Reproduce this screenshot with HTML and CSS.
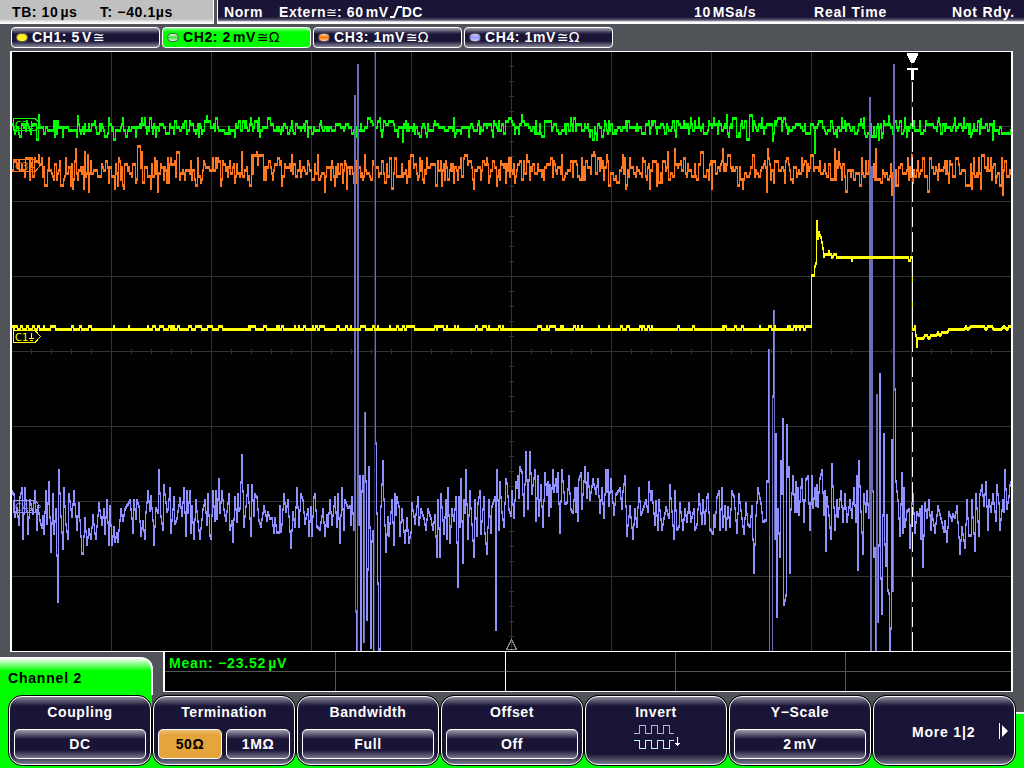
FILE: index.html
```html
<!DOCTYPE html>
<html>
<head>
  <meta charset="utf-8">
  <title>Oscilloscope</title>
  <link rel="stylesheet" href="styles.css">
</head>
<body>
  <div class="scope">
    <div class="header">
      <div class="timebase"><span class="tb">TB: 10<i></i>µs</span><span class="tpos">T: −40.1µs</span></div>
      <div class="trigger">
        <span class="mode">Norm</span>
        <span class="source">Extern<b class="sym">≅</b>: 60<i></i>mV<svg class="edge" width="13" height="12"><path d="M1 11H5L9 1H13" /></svg>DC</span>
        <span class="rate">10<i></i>MSa/s</span>
        <span class="acq">Real Time</span>
        <span class="state">Not Rdy.</span>
      </div>
    </div>

    <div class="channels">
      <div class="channel"><span class="led yellow"></span>CH1: 5<i></i>V<b class="sym">≅</b></div>
      <div class="channel active"><span class="led green"></span>CH2: 2<i></i>mV<b class="sym">≅Ω</b></div>
      <div class="channel"><span class="led orange"></span>CH3: 1mV<b class="sym">≅Ω</b></div>
      <div class="channel"><span class="led violet"></span>CH4: 1mV<b class="sym">≅Ω</b></div>
    </div>

    <svg class="plot" viewBox="10 51 1003 601" width="1003" height="601" shape-rendering="crispEdges">
      <rect x="10" y="51" width="1003" height="601" fill="#fff" />
      <rect x="12" y="52" width="999" height="599" fill="#000" />
      <path id="grid" class="grid" />
      <path class="center-mark" d="M511.5 639.5L506.5 649.5H516.5Z" />

      <g id="traces"></g>

      <g class="tag c2"><path d="M13.5 118.5H35L40.5 124.5L35 130.5H13.5Z" /><text x="15" y="129">C2</text><path d="M31.5 121V126M29 126.5H34M30 128.5H33" /></g>
      <g class="tag c3"><path d="M13.5 159.5H35L40.5 165.5L35 171.5H13.5Z" /><text x="15" y="170">C3</text><path d="M31.5 162V167M29 167.5H34M30 169.5H33" /></g>
      <g class="tag c1"><path d="M13.5 330.5H35L40.5 336.5L35 342.5H13.5Z" /><text x="15" y="341">C1</text><path d="M31.5 333V338M29 338.5H34M30 340.5H33" /></g>
      <g class="tag c4"><path d="M13.5 500.5H35L40.5 506.5L35 512.5H13.5Z" /><text x="15" y="511">C4</text><path d="M31.5 503V508M29 508.5H34M30 510.5H33" /></g>

      <path class="cursor" d="M912.5 82V651" />
      <path fill="#fff" d="M907 53H918V55L914 63H911L907 55ZM907 68H918V70H914V80H911V70H907Z" />
    </svg>

    <div class="lower">
      <div class="tab">Channel 2</div>
      <div class="measure">
        <div class="cell mean">Mean: −23.52<i></i>µV</div><div class="cell lit"></div><div class="cell"></div><div class="cell"></div><div class="cell"></div>
        <div class="cell"></div><div class="cell lit"></div><div class="cell"></div><div class="cell"></div><div class="cell"></div>
      </div>
    </div>

    <div class="softkeys">
      <div class="key"><div class="face"><span>Coupling</span><div class="values"><div class="value">DC</div></div></div></div>
      <div class="key"><div class="face"><span>Termination</span><div class="values"><div class="value selected">50Ω</div><div class="value">1MΩ</div></div></div></div>
      <div class="key"><div class="face"><span>Bandwidth</span><div class="values"><div class="value">Full</div></div></div></div>
      <div class="key"><div class="face"><span>Offset</span><div class="values"><div class="value">Off</div></div></div></div>
      <div class="key"><div class="face"><span>Invert</span>
        <svg class="invert" width="50" height="26" shape-rendering="crispEdges">
          <path stroke="#a4b4e4" d="M0 9.5H5.5V1.5H11.5V9.5H17.5V1.5H23.5V9.5H29.5V1.5H35.5V9.5H40" />
          <path stroke="#c0f4ff" d="M0 16.5H5.5V24.5H11.5V16.5H17.5V24.5H23.5V16.5H29.5V24.5H35.5V16.5H40" />
          <path stroke="#fff" d="M43.5 13V22M41 19.5H46M42 20.5H45" />
        </svg></div></div>
      <div class="key"><div class="face"><span>Y−Scale</span><div class="values"><div class="value">2<i></i>mV</div></div></div></div>
      <div class="key"><div class="face more"><span>More 1|2</span>
        <svg class="next" width="10" height="16"><path d="M0 0H1V16H0ZM3 2L9 8L3 14Z" fill="#fff" /></svg></div></div>
    </div>
  </div>
  <script src="script.js"></script>
</body>
</html>
```
FILE: styles.css
```css
body {
  margin: 0;
  background: #505458;
  color: #fff;
  font-family: "Liberation Sans", Arial, sans-serif;
  font-size: 14px;
  font-weight: bold;
  letter-spacing: 0.6px;
  white-space: nowrap;
}

.scope {
  width: 1024px;
  height: 768px;
  overflow: hidden;
}

/* thin space between number and unit */
i {
  display: inline-block;
  width: 2px;
}

.header {
  display: flex;
  gap: 3px;
  height: 24px;
  line-height: 24px;
}

.timebase {
  box-sizing: border-box;
  width: 214px;
  padding-left: 12px;
  border-right: 1px solid #fff;
  background: linear-gradient(#c0c0c0 19px, #fff 23px);
  color: #000;
  display: flex;
}

.tb {
  width: 88px;
}

.trigger {
  flex: 1;
  box-sizing: border-box;
  padding-left: 6px;
  border-left: 1px solid #fff;
  background: linear-gradient(#1a1536 17px, #55526b 20px, #fff 22px);
  display: flex;
}

.mode {
  width: 55px;
}

.source {
  width: 415px;
}

.rate {
  width: 120px;
}

.acq {
  width: 138px;
  letter-spacing: 0.8px;
}

.state {
  letter-spacing: 0.8px;
}

.edge {
  vertical-align: -1px;
  fill: none;
  stroke: #fff;
  stroke-width: 2;
}

.sym {
  font-family: "DejaVu Sans", sans-serif;
  font-weight: normal;
  font-size: 13px;
  letter-spacing: 0;
}

.channels {
  display: flex;
  gap: 2px;
  padding: 3px 0 3px 11px;
}

.channel {
  box-sizing: border-box;
  width: 149px;
  height: 21px;
  line-height: 19px;
  padding-left: 4px;
  border: 1px solid #fff;
  border-radius: 4px;
  background: linear-gradient(#a09eae, #1a1536 6px, #1a1536 13px, #8a889c);
  display: flex;
  align-items: center;
}

.channel .sym {
  margin-left: 1px;
  font-size: 14px;
}

.channel.active {
  background: linear-gradient(#9f9, #0f0 4px);
  color: #000;
}

.led {
  box-sizing: border-box;
  width: 12px;
  height: 9px;
  margin-right: 4px;
  border: 1px solid #555;
  border-radius: 5px;
}

.led.yellow {
  background: #fe2;
}

.led.green {
  background: linear-gradient(#dfd, #4d4, #dfd);
}

.led.orange {
  background: linear-gradient(#fca, #f70, #fca);
}

.led.violet {
  background: linear-gradient(#ccf, #99f, #ccf);
}

.plot {
  display: block;
  margin-left: 10px;
}

.grid {
  fill: none;
  stroke: #333;
}

.center-mark {
  fill: none;
  stroke: #888;
}

.cursor {
  stroke: #fff;
  stroke-dasharray: 20 5;
}

.tag path {
  fill: none;
  stroke: currentColor;
}

.tag text {
  fill: currentColor;
  font-family: "DejaVu Sans", sans-serif;
  font-weight: normal;
  font-size: 10px;
  letter-spacing: 0;
}

.c1 {
  color: #ff0;
}

.c2 {
  color: #0f0;
}

.c3 {
  color: #ff7820;
}

.c4 {
  color: #9090ff;
}

.c4.dim {
  color: #6c6cb8;
}

.c4.faint {
  color: #2c2c4c;
}

.trace {
  fill: none;
  stroke: currentColor;
}

.lower {
  display: flex;
  gap: 10px;
  height: 43px;
}

.tab {
  box-sizing: border-box;
  width: 153px;
  height: 38px;
  margin-top: 5px;
  padding-left: 8px;
  line-height: 41px;
  letter-spacing: 0.8px;
  border-top: 1px solid #fff;
  border-right: 2px solid #fff;
  border-top-right-radius: 12px;
  background: linear-gradient(#fff, #0f0 13px);
  color: #000;
}

.measure {
  box-sizing: border-box;
  width: 850px;
  height: 40px;
  border: solid #fff;
  border-width: 0 2px 1px;
  background: #000;
  display: grid;
  grid-template-columns: 171px 170px 170px 170px 165px;
  grid-template-rows: 20px 19px;
}

.cell {
  border-right: 1px solid #555;
  border-bottom: 1px solid #555;
}

.cell:nth-child(5n) {
  border-right: 0;
}

.cell:nth-child(n+6) {
  border-bottom: 0;
}

.cell.lit {
  border-right-color: #fff;
}

.mean {
  padding-left: 4px;
  line-height: 22px;
  letter-spacing: 0.8px;
  color: #0f0;
}

.softkeys {
  display: flex;
  height: 73px;
  padding-left: 8px;
  background:
    linear-gradient(#0f0, #0f0) 0 0 / 152px 100% no-repeat,
    linear-gradient(transparent 17px, #fff 17px, #fff 19px, #0f0 19px);
}

.key {
  box-sizing: border-box;
  width: 144px;
  height: 71px;
  border: 1px solid #000;
  border-radius: 14px;
  background: #000;
}

.face {
  box-sizing: border-box;
  height: 69px;
  border: 1px solid #fff;
  border-radius: 13px;
  background: linear-gradient(#8a889c, #1a1536 9px, #1a1536 57px, #7a788c);
  display: flex;
  flex-direction: column;
  align-items: center;
}

.face span {
  height: 32px;
  line-height: 31px;
}

.values {
  display: flex;
  gap: 4px;
  width: 132px;
}

.value {
  flex: 1;
  box-sizing: border-box;
  height: 30px;
  line-height: 28px;
  border: 1px solid #fff;
  border-radius: 5px;
  background: linear-gradient(#a09eae, #1a1536 9px, #1a1536 20px, #7a788c);
  text-align: center;
}

.value.selected {
  background: linear-gradient(#eebb70, #e6a53c 5px);
  color: #000;
}

.invert {
  margin: -5px 0 0 6px;
  fill: none;
}

.face.more {
  flex-direction: row;
  padding-left: 38px;
  letter-spacing: 0.8px;
}

.face.more span {
  line-height: 34px;
}

.next {
  margin-left: 24px;
}
```
FILE: script.js
```js
// graticule
var grid = "";
for (var x = 111; x < 1011; x += 100) grid += "M" + (x + 0.5) + " 52V651";
for (var y = 126; y < 651; y += 75) grid += "M12 " + (y + 0.5) + "H1011";
for (x = 31; x < 1011; x += 20) grid += "M" + (x + 0.5) + " 349V354";
for (y = 66; y < 651; y += 15) grid += "M509 " + (y + 0.5) + "H514";
document.getElementById("grid").setAttribute("d", grid);

var seed = 7;
function rand() {
  seed = (seed * 16807) % 2147483647;
  return seed / 2147483647;
}

// one value per pixel column, straight lines between the listed samples
function interpolate(text) {
  var pts = text.trim().split(/\s+/).map(function (p) { return p.split(",").map(Number); });
  var ys = [];
  for (var i = 1; i < pts.length; i++) {
    var a = pts[i - 1], b = pts[i];
    for (var x = a[0]; x <= b[0]; x++) {
      ys[x] = Math.round(a[1] + (b[1] - a[1]) * (x - a[0]) / (b[0] - a[0]));
    }
  }
  return ys;
}

// ADC noise, in steps of 3px
function noise(base, spread, extra) {
  var ys = [];
  for (var x = 12; x <= 1011; x++) {
    var r = rand() + rand() + rand() - 1.5;
    if (x > 12 && rand() < 0.3) ys[x] = ys[x - 1];
    else ys[x] = base + Math.round(r * spread / 3) * 3;
  }
  for (var k in extra) ys[k] = extra[k];
  return ys;
}

// every column joins its sample to the previous one, fast edges are drawn darker
function draw(name, ys, shift) {
  var bright = "", dim = "", faint = "";
  for (var x = 12; x <= 1010 + shift; x++) {
    if (ys[x] === undefined) continue;
    var prev = ys[x - 1] === undefined ? ys[x] : ys[x - 1];
    var top = Math.min(prev, ys[x]), bottom = Math.min(651, Math.max(prev, ys[x]) + 3);
    var seg = "M" + Math.max(12.5, x - shift + 0.5) + " " + top + "V" + bottom;
    if (name == "c4" && bottom - top > 590) faint += seg;
    else if (name == "c4" && bottom - top > 220) dim += seg;
    else bright += seg;
  }
  document.getElementById("traces").innerHTML +=
    '<path class="trace ' + name + ' faint" d="' + faint + '"/>' +
    '<path class="trace ' + name + ' dim" d="' + dim + '"/>' +
    '<path class="trace ' + name + '" d="' + bright + '"/>';
}

var c4 = `12,490 14,493 15,515 17,507 19,523 20,496 22,487 23,537 25,487 27,510 28,532 30,499 33,512 35,490 37,528 38,505
40,519 42,526 43,515 44,532 46,490 47,522 49,481 51,550 53,493 54,532 56,508 58,600 59,469 61,515 63,547 64,487 66,523 68,537
69,493 72,515 74,490 77,528 79,502 82,552 83,552 85,517 87,543 89,528 91,537 93,514 95,532 96,537 99,502 102,523 104,508 105,532
107,499 109,543 110,505 112,543 114,526 115,540 117,532 118,540 121,508 123,519 125,508 130,499 132,517 133,531 134,499 136,517
137,499 139,505 141,534 143,520 145,537 146,511 148,490 150,509 151,495 153,519 154,543 156,507 158,511 159,469 161,515 163,528
164,484 167,510 168,508 170,487 171,531 174,496 175,522 177,517 180,497 182,514 184,487 186,534 187,490 188,511 190,490 191,531
192,505 194,537 196,499 198,520 200,537 203,508 205,499 207,523 208,493 210,534 211,537 213,490 215,519 216,490 217,517 219,478
220,511 222,490 224,508 226,519 229,493 230,528 232,520 233,540 235,496 237,520 238,493 239,509 240,507 242,454 244,525 248,484
251,534 252,484 254,514 255,493 257,496 259,519 261,525 264,505 267,519 268,511 270,517 272,517 274,531 275,517 277,531 279,531
280,505 281,530 282,523 284,493 286,510 288,499 291,546 293,511 295,525 297,487 299,525 301,493 303,499 305,522 308,508 309,534
311,506 312,534 314,496 315,493 317,525 320,528 323,508 325,534 327,514 328,525 330,499 332,523 335,496 337,525 338,493 340,541
342,487 344,528 345,499 348,506 350,505 351,523 352,496 354,528 355,95 356,610 357,651 358,64 359,523 360,475 361,651 362,490
363,475 364,640 365,412 366,480 367,618 368,568 369,466 370,526 371,646 372,540 373,530 374,651 375,52 376,442 378,582 379,648
380,648 381,505 383,460 384,498 386,550 388,516 389,534 392,499 394,543 395,493 396,513 397,496 399,505 400,534 402,508 405,541
407,517 409,541 411,531 412,502 415,522 418,496 419,523 421,508 424,517 426,528 428,508 431,517 433,528 435,514 437,555 438,499
440,555 441,493 444,532 446,499 447,537 448,487 450,541 452,508 454,519 456,496 458,585 459,496 460,525 461,478 463,561 464,499
465,511 466,469 468,537 470,490 472,523 474,555 475,499 477,534 478,502 480,490 481,532 484,496 485,532 487,552 489,499 491,531
492,505 495,496 496,628 497,469 499,528 500,481 502,511 504,525 506,478 507,482 509,508 511,514 512,490 514,516 516,481 517,486
518,475 519,496 520,466 522,471 524,514 526,451 528,507 530,451 532,492 535,469 536,519 538,475 539,514 541,484 543,525 545,472
547,493 548,481 549,514 550,484 551,505 553,469 554,490 556,478 557,490 558,472 560,531 562,469 565,502 567,501 569,475 571,508
573,511 575,487 576,510 577,487 578,519 579,478 581,472 582,507 585,466 587,496 588,472 590,498 593,478 596,492 598,478 600,511
602,487 604,516 606,469 607,490 608,469 609,504 611,478 614,513 616,493 620,487 622,507 623,490 625,475 627,534 630,505 633,537
635,508 637,525 639,487 641,513 643,508 646,499 648,510 649,481 651,498 652,490 655,523 656,500 658,528 659,499 662,528 666,506
669,516 670,484 672,510 674,537 675,490 677,528 679,525 680,502 683,528 685,508 687,520 689,502 691,520 694,508 695,528 697,523
699,493 702,522 703,499 705,522 707,496 708,493 710,528 713,532 714,514 715,525 717,496 719,490 720,528 722,487 723,525 725,505
726,528 728,506 730,525 732,490 734,495 737,531 739,493 742,517 744,532 746,502 748,523 750,525 752,505 754,571 756,514 758,487
761,502 763,520 766,519 767,480 768,480 769,349 770,651 772,651 773,395 774,310 775,537 776,433 777,615 778,508 780,555 781,460
782,492 783,418 784,603 786,594 787,424 788,475 789,466 790,571 791,508 793,475 795,510 796,481 797,510 798,487 799,513 801,486
802,478 804,520 806,478 808,475 810,528 812,475 813,506 815,487 816,504 817,484 818,505 820,477 822,469 824,513 825,490 826,549
827,496 829,514 831,537 832,463 835,528 837,499 838,515 841,490 843,520 845,493 847,520 850,499 852,516 854,487 856,520 857,475
858,568 859,460 861,510 863,552 864,493 866,510 867,490 869,516 870,97 871,651 872,166 873,490 874,555 875,547 876,651 877,394
878,620 879,544 880,373 881,577 882,612 883,514 884,433 885,543 886,564 887,514 888,589 889,592 890,651 891,627 892,439 893,589
894,64 895,388 896,480 898,499 900,534 902,472 903,531 904,487 905,525 907,510 909,508 910,546 912,502 913,493 915,531 917,511
919,514 920,508 921,537 922,505 923,565 925,502 927,516 929,499 931,528 932,511 935,531 938,505 941,517 944,530 945,520 947,540
949,511 952,519 953,513 955,516 957,505 960,552 962,526 965,546 967,499 969,534 971,534 972,499 975,549 976,493 979,534 980,493
982,484 984,504 986,481 988,528 989,499 991,510 993,493 995,510 996,519 997,484 999,502 1000,528 1003,499 1004,510 1005,469
1007,507 1009,495 1010,484 1012,478`;

draw("c2", noise(126, 9, {
  77: 115, 206: 115, 135: 135, 198: 135, 402: 140, 250: 117, 772: 139, 814: 151, 860: 118, 881: 136, 888: 115, 980: 118
}), 0);
draw("c3", noise(169, 17, {
  84: 151, 88: 190, 157: 190, 114: 187, 72: 187, 167: 157, 170: 157, 810: 154, 834: 148, 891: 193, 875: 148, 1002: 193
}), 0);
draw("c4", interpolate(c4), 1);

var c1 = [];
var low = 325;
for (x = 12; x < 811; x++) {
  // the level toggles between two codes, rarely in the quiet stretches
  var quiet = (x > 50 && x < 77) || (x > 108 && x < 142) || (x > 220 && x < 250) || x > 700 && x < 720;
  if (low == 325) { if (rand() < 0.4) low = 328; }
  else if (rand() < (quiet ? 0.03 : 0.18)) low = 325;
  c1[x] = low;
}
Object.assign(c1, interpolate(`811,274 813,274 814,265 815,262 816,220 817,237 818,231 819,234 820,236 821,241 822,247 823,255
824,253 827,253 828,250 829,253 830,253 831,256 833,253 835,253 836,256 850,256 851,259 852,256 907,256 908,259 909,259 910,256
911,256 912,328 913,328 914,325 915,334 916,345 917,337 922,337 924,334 926,334 928,337 930,334 935,334 937,331 939,334 941,331
946,331 948,328 963,328 965,325 967,328 970,325 983,325 985,328 987,325 991,325 993,328 1000,328 1003,325 1006,328 1008,325 1011,325`));
draw("c1", c1, 0);
```
